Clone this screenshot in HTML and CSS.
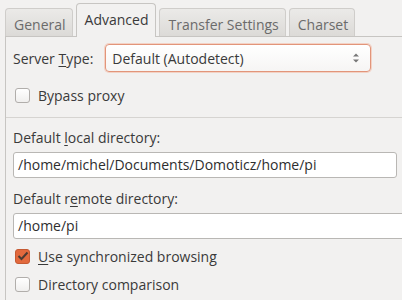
FILE: index.html
```html
<!DOCTYPE html>
<html>
<head><meta charset="utf-8"><link rel="stylesheet" href="styles.css"></head>
<body>
<div class="tabs">
  <div class="tab">General</div>
  <div class="tab active">Advanced</div>
  <div class="tab">Transfer Settings</div>
  <div class="tab">Charset</div>
</div>
<div class="panel">
  <div class="row">
    <span class="label">Server <u>T</u>ype:</span>
    <div class="combo"><span>Default (Autodetect)</span>
      <svg class="arrows" width="8" height="12" viewBox="0 0 8 12"><path d="M1 4.5 L4 1.5 L7 4.5 Z M1 7.5 L4 10.5 L7 7.5 Z" fill="#777"/></svg>
    </div>
  </div>
  <label class="check c0"><span class="box"></span>Bypass proxy</label>
  <div class="sep"></div>
  <div class="field-label">Default <u>l</u>ocal directory:</div>
  <div class="entry short">/home/michel/Documents/Domoticz/home/pi</div>
  <div class="field-label">Default r<u>e</u>mote directory:</div>
  <div class="entry wide">/home/pi</div>
  <label class="check c1"><span class="box on"><svg width="12" height="10" viewBox="0 0 12 10"><path d="M1.5 5 L4.5 8 L10.5 1.5" stroke="#4a3b33" stroke-width="2" fill="none"/></svg></span><span><u>U</u>se synchronized browsing</span></label>
  <label class="check c2"><span class="box"></span>Directory comparison</label>
</div>
</body>
</html>
```
FILE: styles.css
```css
html, body { margin: 0; padding: 0; }
body {
  width: 402px; height: 300px; overflow: hidden;
  background: #f2f1f0;
  font-family: "Open Sans", "Noto Sans", sans-serif;
  font-size: 14px;
  color: #3a3a3a;
}
u { text-decoration: underline; text-underline-offset: 2px; }
.tabs { display: flex; align-items: flex-end; padding-left: 5px; gap: 3px; height: 36px; }
.tab {
  height: 28px; box-sizing: border-box;
  border: 1px solid #cfcdca; border-bottom: none;
  border-radius: 4px 4px 0 0;
  background: linear-gradient(#ebeae8, #dcdad7);
  color: #6b6b6b;
  padding: 6px 6px 0 8px;
  line-height: 20px;
}
.tab.active {
  height: 34px; background: #f2f1f0; color: #3a3a3a;
  padding: 6px 7px 0 8px; position: relative; top: 1px; border-color: #c7c5c2;
}
.panel {
  margin-left: 5px; border-left: 1px solid #c7c5c2; border-top: 1px solid #c7c5c2;
  padding: 7px 5px 0 7px; height: 256px; overflow: hidden;
}
.row { display: flex; align-items: center; gap: 12px; height: 28px; }
.combo {
  width: 266px; height: 28px; box-sizing: border-box;
  border: 1px solid #e2957a; border-radius: 4px;
  box-shadow: 0 0 0 1px #f3d2c5;
  background: linear-gradient(#ffffff, #f6f5f4);
  display: flex; align-items: center; justify-content: space-between;
  padding: 0 10px 0 6px; color: #3a3a3a;
}
.check { display: flex; align-items: center; gap: 8px; height: 20px; }
.box {
  width: 13px; height: 13px; border: 1px solid #b1aeab; border-radius: 3px;
  background: linear-gradient(#ffffff, #f0efee); display: flex; align-items: center; justify-content: center;
  margin-left: 2px;
}
.box.on { background: #e2693d; border-color: #c55a33; }
.check.c0 { margin-top: 13px; }
.sep { height: 1px; background: #d6d4d1; margin: 12px -5px 0 -7px; }
.field-label { margin-top: 10px; height: 20px; line-height: 20px; }
.entry {
  height: 26px; box-sizing: border-box; margin-top: 4px;
  border: 1px solid #b9b7b4; border-radius: 3px; background: #fff;
  padding: 0 4px; line-height: 24px; color: #2e2e2e;
}
.entry.short { width: 384px; }
.entry.wide { width: 400px; }
.entry.short + .field-label { margin-top: 11px; }
.check.c1 { margin-top: 7px; }
.check.c2 { margin-top: 8px; }
```
